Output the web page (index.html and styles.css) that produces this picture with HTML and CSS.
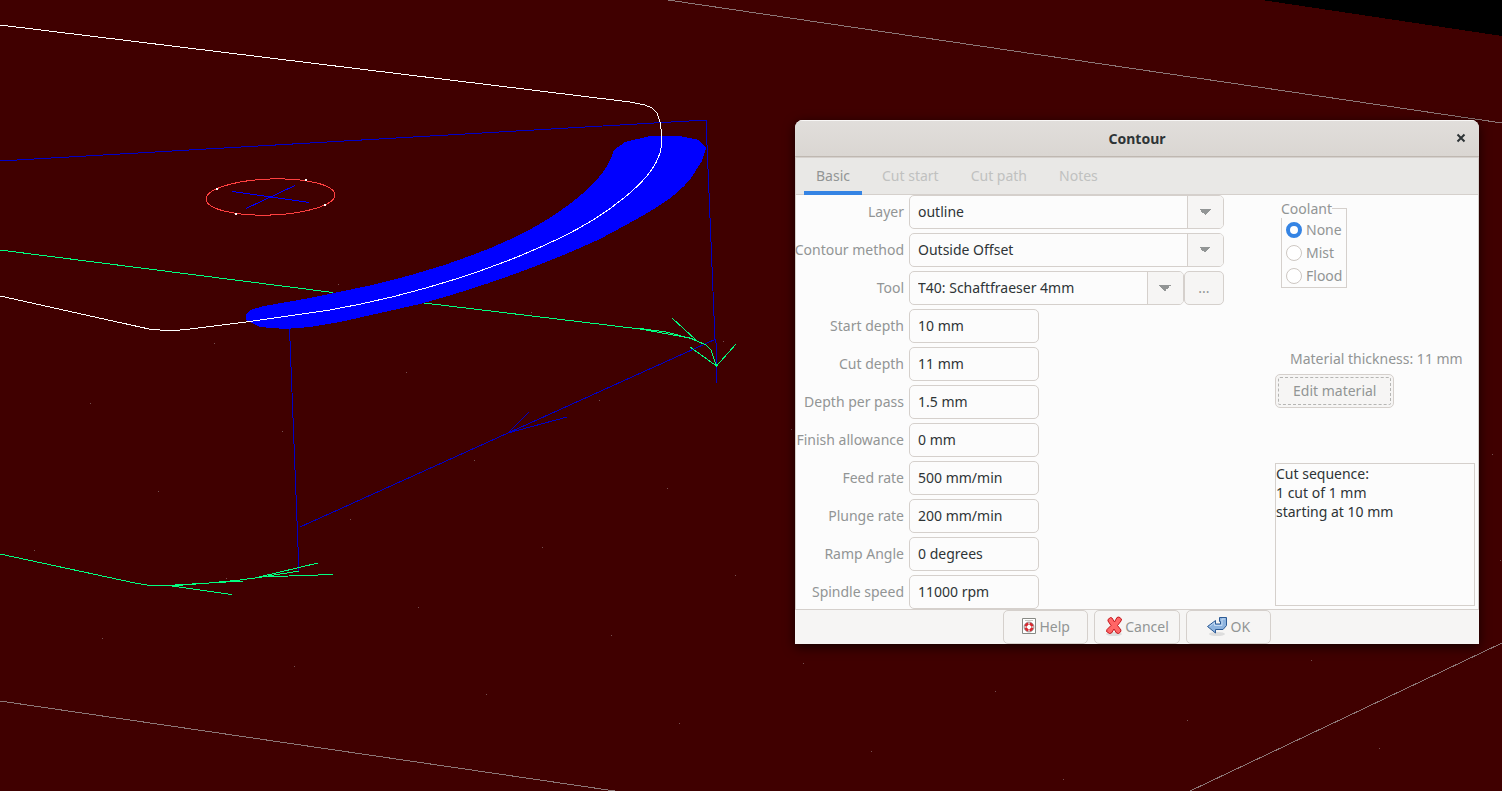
FILE: index.html
```html
<!DOCTYPE html>
<html lang="en">
<head>
<meta charset="utf-8">
<title>Contour</title>
<link rel="stylesheet" href="styles.css">
</head>
<body>
<svg class="scene" viewBox="0 0 1502 791" preserveAspectRatio="xMinYMin slice" shape-rendering="crispEdges" aria-hidden="true">
  <path class="void" d="M1262 0H1502V36Z"/>
  <g class="grid">
    <path d="M668 0L1502 123M0 701L615 791M1190 791L1502 643"/>
  </g>
  <g class="specks">
    <path d="M406 372h1M90 403h1M282 431h1M474 460h1M667 488h1M158 491h1M350 519h1M542 547h1M735 575h1M34 550h1M226 578h1M418 607h1M611 635h1M102 638h1M294 666h1M486 694h1M679 723h1M871 751h1M1063 779h1M803 663h1M995 691h1M1187 720h1M1379 748h1M1311 660h1M214 343h1M599 400h1M791 429h1M338 284h1M531 312h1M723 341h1M1492 454h1M1500 560h1"/>
  </g>
  <path class="blue" d="M0 161L706 120L715 340L716.500 345V383M289.500 328L299 572M300 527L716 339M508 433L529 412M508 433L567 417"/>
  <path class="green" d="M0 250L333 292.500M424 303L640 329L690 338L706 345L711 350L716.500 366M636 328L666 332L693 339M672 318L696 340M690 347L716.500 366L736 344M0 554L135 583L150 585.500L170 586L209 583L240 580L262 577L299 571M168 585.500L232 594.500M175 585L243 581M259 577L318 563M259 577L333 574.500"/>
  <path class="cross" d="M232 191.500L309 202.500M246 208.500L295 185.500"/>
  <path class="cut" d="M246 320L246 314L250 310L264 306L310 298L334 293C440 273 520 240 560 211C590 190 609 170 614 150L625 142L650 136H679L699 140L706 148L702 161L691 178C675 199 650 212 600 239C550 262 490 285 420 304L340 322L310 327L285 329L260 327Z"/>
  <path class="white" d="M0 25L630 102L645 105L652 108L657 113L660 122C663 138 662 150 658 158C650 180 610 214 560 238C500 267 420 294 330 310L246 322L190 329L170 331L149 329L0 296"/>
  <ellipse class="hole" cx="270.500" cy="197" rx="64.500" ry="18" transform="rotate(-2 270.500 197)"/>
  <path class="points" d="M216 188h2v2h-2zM305 179h2v2h-2zM324 204h2v2h-2zM235 213h2v2h-2z"/>
</svg>

<main class="desk">
<form class="dialog" aria-labelledby="title">
  <header class="titlebar">
    <h1 id="title">Contour</h1>
    <button type="button" class="close" aria-label="Close"><svg width="10" height="10" viewBox="0 0 10 10"><path d="M1.500 1.500L8.500 8.500M8.500 1.500L1.500 8.500"/></svg></button>
  </header>
  <nav class="tabs" role="tablist">
    <button type="button" class="tab active" role="tab" aria-selected="true">Basic</button>
    <button type="button" class="tab" role="tab" aria-selected="false">Cut start</button>
    <button type="button" class="tab" role="tab" aria-selected="false">Cut path</button>
    <button type="button" class="tab" role="tab" aria-selected="false">Notes</button>
  </nav>
  <div class="page">
    <div class="fields">
      <label for="layer">Layer</label>
      <span class="combo"><select id="layer"><option>outline</option></select></span>
      <label for="method">Contour method</label>
      <span class="combo"><select id="method"><option>Outside Offset</option></select></span>
      <label for="tool">Tool</label>
      <span class="toolrow"><span class="combo"><select id="tool"><option>T40: Schaftfraeser 4mm</option></select></span><button type="button" class="btn more">...</button></span>
      <label for="start">Start depth</label><input id="start" value="10 mm">
      <label for="depth">Cut depth</label><input id="depth" value="11 mm">
      <label for="pass">Depth per pass</label><input id="pass" value="1.5 mm">
      <label for="finish">Finish allowance</label><input id="finish" value="0 mm">
      <label for="feed">Feed rate</label><input id="feed" value="500 mm/min">
      <label for="plunge">Plunge rate</label><input id="plunge" value="200 mm/min">
      <label for="ramp">Ramp Angle</label><input id="ramp" value="0 degrees">
      <label for="spindle">Spindle speed</label><input id="spindle" value="11000 rpm">
    </div>
    <div class="side">
      <fieldset class="coolant">
        <legend>Coolant</legend>
        <label><input type="radio" name="coolant" checked>None</label>
        <label><input type="radio" name="coolant">Mist</label>
        <label><input type="radio" name="coolant">Flood</label>
      </fieldset>
      <div class="material">
        <p>Material thickness: 11 mm</p>
        <button type="button" class="btn focus">Edit material</button>
      </div>
      <textarea class="sequence" aria-label="Cut sequence" readonly>Cut sequence:
1 cut of 1 mm
starting at 10 mm</textarea>
    </div>
  </div>
  <footer class="actions">
    <button type="button" class="btn"><svg width="16" height="18" viewBox="0 0 16 18"><path d="M1.500 1.500h13v15h-13z" fill="#fff" stroke="#888a85"/><path d="M4 3.500h8" stroke="#c5c7c2"/><circle cx="8" cy="10" r="3.500" fill="none" stroke="#d8282f" stroke-width="2.600"/><path d="M5 7l1.500 1.500M11 7l-1.500 1.500M5 13l1.500-1.500M11 13l-1.500-1.500" stroke="#d8282f"/><path d="M8 5v2.500M8 12.500v2.500M3 10h2.500M10.500 10H13" stroke="#ddd" stroke-width="1.500"/><circle cx="8" cy="10" r="5" fill="none" stroke="#777" stroke-width=".6"/></svg>Help</button>
    <button type="button" class="btn"><svg width="18" height="20" viewBox="0 0 18 20"><ellipse cx="9" cy="18" rx="8" ry="2" fill="#ddd"/><path d="M3 3.500L5.500 1.500L7 2L9.500 6L12 1.500L14 1L16.500 3L16 5L12.500 9.500L16 14L15.500 16L13.500 17.500L11.500 17L9 13L6.500 17L4.500 17.500L1.500 15.500L2 13.500L6 9.500L3 5Z" fill="#f66" stroke="#c4161c" stroke-linejoin="round"/></svg>Cancel</button>
    <button type="button" class="btn"><svg width="22" height="20" viewBox="0 0 22 20"><ellipse cx="11" cy="18" rx="8" ry="2" fill="#ddd"/><path d="M1.500 10.500L9.500 4.500V8H14.500V5.500H13.500V1.500H20.500V9.500L17 13.500H9.500V17Z" fill="#8db3de" stroke="#2c5a95" stroke-linejoin="round"/><path d="M3.500 10.500L8.500 6.500V9.500H16V3H19" fill="none" stroke="#c4daf2"/></svg>OK</button>
  </footer>
</form>
</main>
</body>
</html>
```
FILE: styles.css
```css
* { box-sizing: border-box; }
body {
  margin: 0;
  min-height: 100vh;
  background: #400000;
  color: #2e3436;
  font: 14px/19px "Noto Sans", sans-serif;
  overflow: hidden;
}
button, input, select, textarea { font: inherit; color: inherit; margin: 0; }
.scene { position: absolute; inset: 0; width: 100%; height: 100%; fill: none; stroke-width: 1; }
.void { fill: #000; }
.grid { stroke: #8c7676; }
.specks { stroke: #755050; }
.green { stroke: #00ff80; }
.blue { stroke: #0000c8; }
.cross { stroke: #00f; }
.cut { fill: #00f; }
.white { stroke: #fff; }
.hole { stroke: #ff4040; }
.points { fill: #fff; }

.desk { position: relative; display: flex; justify-content: flex-end; padding: 120px 23px 0; }
.dialog {
  width: 684px;
  background: #f6f5f4;
  border-radius: 8px 8px 0 0;
  box-shadow: 0 3px 12px rgba(0, 0, 0, .7);
  overflow: hidden;
}
.titlebar {
  display: grid;
  grid-template-columns: 36px 1fr 36px;
  align-items: center;
  height: 37px;
  background: linear-gradient(#e1dedb, #dad6d2);
  border-bottom: 1px solid #bfb8b1;
  box-shadow: inset 0 1px #f8f7f6;
}
h1 { grid-column: 2; margin: 0; font-size: 14px; font-weight: 700; text-align: center; }
.close { display: flex; justify-content: center; padding: 8px; border: 0; background: none; }
.close svg { stroke: #2e3436; stroke-width: 2; }
.tabs {
  display: flex;
  gap: 8px;
  height: 38px;
  padding: 0 8px;
  background: #e9e8e6;
  border: 1px solid #d5d0cc;
}
.tab {
  margin-bottom: -1px;
  padding: 2px 12px 0;
  border: 0;
  border-bottom: 4px solid transparent;
  background: none;
  color: #c0c1c0;
}
.tab.active { border-color: #3584e4; color: #929595; }
.page {
  display: flex;
  justify-content: space-between;
  background: #fcfcfc;
  border: solid #d5d0cc;
  border-width: 0 1px 1px;
  color: #929595;
}
.fields { display: grid; grid-template-columns: 108px 315px; column-gap: 5px; row-gap: 4px; align-items: center; }
.fields label { display: flex; justify-content: flex-end; padding-bottom: 2px; white-space: nowrap; }
.fields input, .combo {
  height: 34px;
  border: 1px solid #d5d0cc;
  border-radius: 5px;
  background: #fcfcfc;
  color: #2e3436;
}
.fields input { width: 130px; padding: 0 8px 2px; }
.combo { position: relative; display: flex; flex: 1; overflow: hidden; }
.combo select { flex: 1; padding: 0 8px 2px; border: 0; appearance: none; background: none; }
.combo::after {
  content: "";
  position: absolute;
  inset: 0 0 0 auto;
  width: 35px;
  border-left: 1px solid #d5d0cc;
  background:
    linear-gradient(to bottom left, #929595 50%, transparent 50%) 11px 13px / 6px 6px no-repeat,
    linear-gradient(to bottom right, #929595 50%, transparent 50%) 17px 13px / 6px 6px no-repeat,
    #f6f5f4;
  pointer-events: none;
}
.toolrow { display: flex; }
.btn {
  display: flex;
  align-items: center;
  justify-content: center;
  height: 34px;
  padding: 0 17px 2px;
  border: 1px solid #d5d0cc;
  border-radius: 5px;
  background: #f6f5f4;
  color: #929595;
}
.more { width: 40px; padding: 0 0 2px; }
.side { display: flex; flex-direction: column; width: 203px; padding: 4px 3px 3px 0; }
.coolant { align-self: flex-start; margin: 0 0 0 6px; padding: 0 4px; border: 1px solid #d5d0cc; }
.coolant legend { margin-left: -5px; padding: 0; }
.coolant label { display: flex; align-items: center; gap: 4px; height: 23px; }
.coolant input { appearance: none; width: 16px; height: 16px; border: 1px solid #cdc7c2; border-radius: 50%; background: #fff; }
.coolant input:checked { border: 4px solid #3584e4; }
.material { margin-top: 61px; }
.material p { margin: 0 0 6px 15px; white-space: nowrap; }
.focus { outline: 1px dashed #b5b5b3; outline-offset: -4px; }
.sequence { display: block; flex: 1; width: 100%; margin-top: 55px; padding: 0; border: 1px solid #d5d0cc; background: #fcfcfc; color: #2e3436; resize: none; outline: 0; }
.actions { display: flex; justify-content: center; gap: 6px; }
.actions .btn { gap: 2px; min-width: 85px; padding: 0 10px 2px; }
```
